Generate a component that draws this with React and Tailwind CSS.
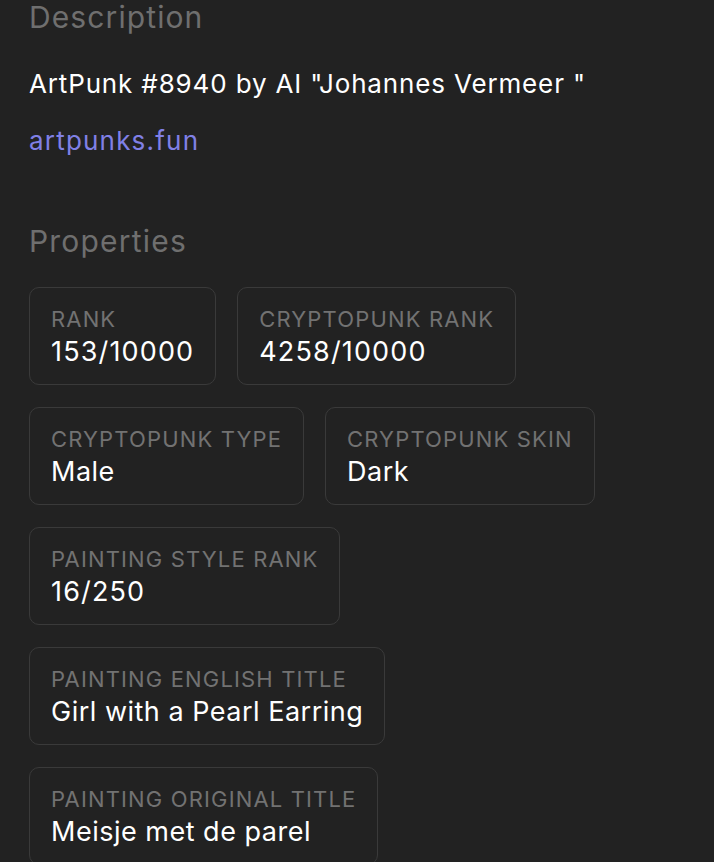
export default function App() {
  const rows = [
    [["RANK", "153/10000", true], ["CRYPTOPUNK RANK", "4258/10000", true]],
    [["CRYPTOPUNK TYPE", "Male"], ["CRYPTOPUNK SKIN", "Dark"]],
    [["PAINTING STYLE RANK", "16/250", true]],
    [["PAINTING ENGLISH TITLE", "Girl with a Pearl Earring"]],
    [["PAINTING ORIGINAL TITLE", "Meisje met de parel"]],
  ];
  return (
    <div
      className="w-[714px] h-[862px] overflow-hidden bg-[#222222] pl-[29px]"
      style={{ fontFamily: "Inter, 'Noto Sans', sans-serif" }}
    >
      <h2 className="mt-[-1px] text-[30px] leading-[36px] tracking-[1.1px] text-[#6f6f6f] font-normal">
        Description
      </h2>
      <p className="mt-[31px] text-[26px] leading-[36px] tracking-[0.85px] text-white">
        ArtPunk #8940 by AI "Johannes Vermeer "
      </p>
      <a className="block mt-[21px] text-[26px] leading-[36px] tracking-[1.2px] text-[#8080e6]">
        artpunks.fun
      </a>
      <h2 className="mt-[64px] text-[30px] leading-[36px] tracking-[1.2px] text-[#6f6f6f] font-normal">
        Properties
      </h2>
      <div className="mt-[28px] flex flex-col gap-[22px]">
        {rows.map((row, i) => (
          <div key={i} className="flex gap-[21px]">
            {row.map(([label, value, num]) => (
              <div
                key={label}
                className="rounded-[10px] border border-[#3a3a3a] px-[21px] pt-[16px] pb-[14px]"
              >
                <div className="text-[22px] leading-[30px] tracking-[1.15px] text-[#727272]">{label}</div>
                <div
                  className={
                    num
                      ? "text-[27px] leading-[36px] tracking-[1.15px] text-white"
                      : "text-[27px] leading-[36px] tracking-[0.5px] text-white"
                  }
                >
                  {value}
                </div>
              </div>
            ))}
          </div>
        ))}
      </div>
    </div>
  );
}
